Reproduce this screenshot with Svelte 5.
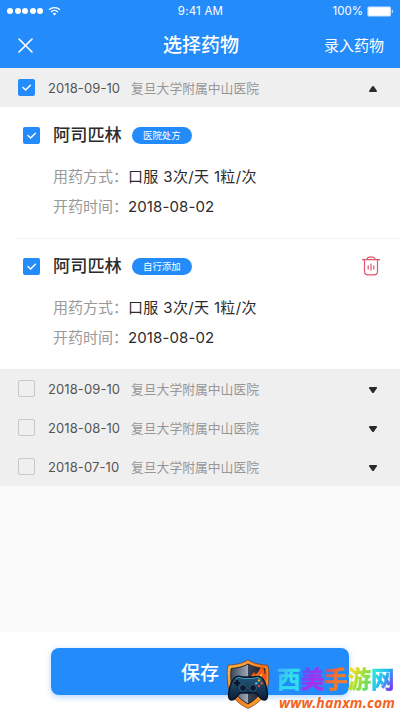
<script>
  let medicines = [
    { name: "阿司匹林", tag: "医院处方", usage: "口服 3次/天 1粒/次", date: "2018-08-02", checked: true, removable: false },
    { name: "阿司匹林", tag: "自行添加", usage: "口服 3次/天 1粒/次", date: "2018-08-02", checked: true, removable: true }
  ];

  let records = [
    { date: "2018-09-10", hospital: "复旦大学附属中山医院", checked: true, open: true, items: medicines },
    { date: "2018-09-10", hospital: "复旦大学附属中山医院", checked: false, open: false, items: [] },
    { date: "2018-08-10", hospital: "复旦大学附属中山医院", checked: false, open: false, items: [] },
    { date: "2018-07-10", hospital: "复旦大学附属中山医院", checked: false, open: false, items: [] }
  ];

  function toggleOpen(record) {
    record.open = !record.open;
    records = records;
  }

  function toggleCheck(item) {
    item.checked = !item.checked;
    records = records;
  }

  function remove(record, item) {
    record.items = record.items.filter((i) => i !== item);
    records = records;
  }
</script>

<div class="screen">
  <header>
    <div class="status">
      <div class="signal">
        {#each Array(5) as _}<i></i>{/each}
        <svg class="wifi" width="13" height="10" viewBox="0 0 14 11" fill="none" stroke="#fff" stroke-width="1.5">
          <path d="M1 4.2a8.6 8.6 0 0 1 12 0M3.2 6.5a5.5 5.5 0 0 1 7.6 0" />
          <path d="M7 10.4 5 8.3a3 3 0 0 1 4 0z" fill="#fff" stroke="none" />
        </svg>
      </div>
      <span class="time">9:41 AM</span>
      <div class="power">
        <span>100%</span>
        <svg width="27" height="11" viewBox="0 0 27 11">
          <rect x=".4" y=".4" width="23.6" height="10.2" rx="1.6" fill="#fff" fill-opacity=".75" />
          <rect x="1.6" y="1.6" width="21.2" height="7.8" rx=".6" fill="#fff" />
          <path d="M24.8 3.6c1.3.3 1.3 3.5 0 3.8z" fill="#fff" />
        </svg>
      </div>
    </div>
    <nav>
      <button class="close" aria-label="关闭">
        <svg width="15" height="15" viewBox="0 0 15 15" stroke="#fff" stroke-width="1.6" stroke-linecap="round">
          <path d="M1 1l13 13M14 1L1 14" />
        </svg>
      </button>
      <h1>选择药物</h1>
      <button class="entry">录入药物</button>
    </nav>
  </header>

  <main>
    {#each records as record}
      <section>
        <div class="record">
          <button class="check" class:on={record.checked} aria-label="选择" on:click={() => toggleCheck(record)}>
            {#if record.checked}
              <svg width="17" height="17" viewBox="0 0 17 17"><path d="M5 8.5l2.6 2.5 4.8-4.8" /></svg>
            {/if}
          </button>
          <span class="date">{record.date}</span>
          <span class="hospital">{record.hospital}</span>
          <button class="arrow" class:open={record.open} aria-label="展开" on:click={() => toggleOpen(record)}>
            <svg width="10" height="8" viewBox="0 0 10 8">
              <path d="M1.6 1h6.8q1 .2.5 1.2L6 6.4q-1 1.1-2 0L1.1 2.2Q.6 1.2 1.6 1z" fill="#2b2b2b" />
            </svg>
          </button>
        </div>

        {#if record.open}
          {#each record.items as item}
            <article>
              <div class="title">
                <button class="check" class:on={item.checked} aria-label="选择" on:click={() => toggleCheck(item)}>
                  {#if item.checked}
                    <svg width="17" height="17" viewBox="0 0 17 17"><path d="M5 8.5l2.6 2.5 4.8-4.8" /></svg>
                  {/if}
                </button>
                <h2>{item.name}</h2>
                <span class="tag">{item.tag}</span>
                {#if item.removable}
                  <button class="trash" aria-label="删除" on:click={() => remove(record, item)}>
                    <svg width="18" height="20" viewBox="0 0 18 20" fill="none" stroke="#e0566b" stroke-width="1.2">
                      <path d="M0 3.6h18M4.800 3.400c.4-1.700 1-2.300 2.300-2.300h3.800c1.300 0 1.900.6 2.300 2.300" />
                      <path d="M2.500 3.800v11.400q0 3.600 3.600 3.600h5.800q3.600 0 3.600-3.600V3.800" />
                      <path d="M6.200 9.400v4M9 7.800v7M11.800 9.400v4" />
                    </svg>
                  </button>
                {/if}
              </div>
              <dl>
                <dt>用药方式：</dt>
                <dd>{item.usage}</dd>
                <dt>开药时间：</dt>
                <dd class="num">{item.date}</dd>
              </dl>
            </article>
          {/each}
        {/if}
      </section>
    {/each}
  </main>

  <footer>
    <button class="save">保存</button>
  </footer>

  <div class="brand">
    <svg width="46" height="50" viewBox="0 0 46 50">
      <defs>
        <linearGradient id="rim" x1="0" y1="0" x2="1" y2="1">
          <stop offset="0" stop-color="#ffc252" />
          <stop offset=".5" stop-color="#f47a1c" />
          <stop offset="1" stop-color="#ffb02e" />
        </linearGradient>
        <linearGradient id="steel" x1="0" y1="0" x2="1" y2="0">
          <stop offset="0" stop-color="#3b4655" />
          <stop offset=".49" stop-color="#9aa9b8" />
          <stop offset=".5" stop-color="#3a4352" />
          <stop offset="1" stop-color="#171c28" />
        </linearGradient>
        <linearGradient id="pad" x1="0" y1="0" x2="0" y2="1">
          <stop offset="0" stop-color="#245a7b" />
          <stop offset="1" stop-color="#0b1c33" />
        </linearGradient>
      </defs>
      <path d="M23 .8C18 4.6 10 5.8 3.2 6.2 1.5 12 2.3 17 2.5 23c.5 12 9 21 20.500 26.500C35 44 43 35 43.500 23c.2-6 1-11-.7-16.800C36 5.800 28 4.600 23 .8z" fill="url(#rim)" stroke="#712e16" stroke-width=".7" />
      <path d="M23 5C18 8 12 9 6.200 9.500c-.8 5-.4 10 0 14C7.500 33 14 40 23 45c9-5 15.500-12 16.800-21.500.4-4 .8-9 0-14C34 9 28 8 23 5z" fill="url(#steel)" stroke="#262a36" />
      <path d="M22 20c5-1 4-5 8-7-1 3 1 3 3 0 2-2 1-4 5-7-1 4 3 5 1 9 3-1 3-3 3-3 1 7-1 12-5 15H25z" fill="#f05d16" />
      <path d="M26 21c4-1 4-4 7-6 0 3 2 2 4-1 0 5-1 7-4 9z" fill="#ffc83d" />
      <path d="M10 18.500c2-2 5-1.500 7.500-.5h11c3-1 6-1.500 8 .5 4 3 6 13 6 18 0 5-4 6-7 2.500L31 34H15l-4.500 5c-3 3.500-7 2.500-7-2.500 0-5 2.500-15 6.500-18z" fill="url(#pad)" stroke="#071226" stroke-width="1.300" />
      <path d="M11 19.500c3-2 6 0 7 0h10c3-1 6-1.500 8 .5" fill="none" stroke="#4ba4c6" stroke-width=".8" />
      <path d="M12 21v6M9 24h6" stroke="#081426" stroke-width="2.200" />
      <circle cx="18" cy="29" r="3.400" fill="#0c1930" stroke="#3b7894" stroke-width=".7" />
      <circle cx="28" cy="29" r="3.400" fill="#0c1930" stroke="#3b7894" stroke-width=".7" />
      <circle cx="34" cy="21.500" r="1.200" fill="#f3b02d" />
      <circle cx="31.300" cy="24.200" r="1.200" fill="#45bce8" />
      <circle cx="36.700" cy="24.200" r="1.200" fill="#ef5230" />
      <circle cx="34" cy="27" r="1.200" fill="#e94a3e" />
    </svg>
    <div class="words">
      <div class="cn"><b class="c1">西</b><b class="c2">美</b><b class="c3">手</b><b class="c4">游</b><b class="c5">网</b></div>
      <div class="url">www.hanxm.com</div>
    </div>
  </div>
</div>

<style>
  :global(body) { background: #fafafa; }

  .screen {
    --blue: #248bfb;
    position: relative;
    display: flex; flex-direction: column;
    width: 400px; height: 710px;
    overflow: hidden;
    background: #fafafa;
    font-family: Inter, "Noto Sans CJK SC", sans-serif;
    color: #2b2b2b;
  }

  button {
    margin: 0; padding: 0; border: 0;
    background: none; color: inherit;
    font: inherit; cursor: pointer;
  }
  svg { display: block; }

  header { height: 68px; background: var(--blue); color: #fff; }

  .status {
    display: grid; grid-template-columns: 1fr auto 1fr; align-items: center;
    height: 22px; padding: 0 6px 0 7px;
    font-size: 11.5px; line-height: 22px;
  }
  .signal { display: flex; align-items: center; gap: 1.5px; }
  .signal i { width: 6px; height: 6px; border-radius: 50%; background: #fff; }
  .wifi { margin-left: 3px; }
  .time { letter-spacing: .2px; }
  .power { display: flex; justify-content: flex-end; align-items: center; gap: 4px; }

  nav {
    display: grid; grid-template-columns: 1fr auto 1fr; align-items: center;
    height: 46px; padding: 0 16px 0 18px;
  }
  .close { justify-self: start; }
  h1 { margin: 0; padding-top: 2px; font-size: 19px; font-weight: 500; line-height: 44px; }
  .entry { justify-self: end; margin-top: -2px; font-size: 15px; }

  .record {
    display: flex; align-items: center;
    height: 39px; padding: 0 22px 0 18px;
    background: #efefef;
  }

  .check {
    flex: none;
    box-sizing: border-box;
    width: 17px; height: 17px;
    border: 1px solid #c8c8c8; border-radius: 2px;
  }
  .check.on { border: 0; background: var(--blue); }
  .check path { fill: none; stroke: #fff; stroke-width: 1.5; stroke-linecap: round; stroke-linejoin: round; }

  .date { width: 83px; margin-left: 13px; font-size: 13px; letter-spacing: .1px; color: #555; white-space: nowrap; }
  .hospital { font-size: 12.8px; color: #969696; }
  .arrow { margin-left: auto; padding-top: 3px; }
  .arrow.open svg { transform: rotate(180deg); }

  article {
    box-sizing: border-box;
    height: 131px; padding: 17px 20px 0 23px;
    background: #fff;
  }
  article + article { box-shadow: inset 16px 0 #fff, inset 0 1px #f2f2f2; }

  .title { display: flex; align-items: center; height: 22px; }
  h2 { margin: 0 0 0 13px; font-size: 17.2px; font-weight: 500; line-height: 22px; }
  .tag {
    width: 60px; height: 17px; margin-left: 10px;
    border-radius: 9px;
    background: var(--blue); color: #fff;
    font-size: 9.4px; line-height: 18px; text-align: center;
  }
  .trash { margin-left: auto; }

  dl {
    display: grid; grid-template-columns: 75px 1fr; grid-auto-rows: 30px;
    margin: 16px 0 0 30px;
    font-size: 15px; line-height: 30px;
  }
  dt { color: #999; white-space: nowrap; }
  dd { margin: 0; letter-spacing: .35px; white-space: nowrap; }
  .num { letter-spacing: .12px; }

  footer {
    box-sizing: border-box;
    height: 78px; margin-top: auto; padding: 16px 51px 0;
    background: #fff;
  }
  .save {
    width: 100%; height: 47px;
    border-radius: 8px;
    background: var(--blue); color: #fff;
    box-shadow: 0 2px 6px rgba(36, 139, 251, .35);
    font-size: 19px; font-weight: 500;
  }

  /* site mark floats over the bottom bar */
  .brand {
    position: absolute; left: 225px; top: 659px;
    display: flex;
  }
  .words { padding: 7px 0 0 6px; }
  .cn { display: flex; height: 27px; font-size: 23.500px; line-height: 27px; }
  .cn b { font-weight: 700; color: transparent; background-clip: text; -webkit-background-clip: text; -webkit-text-stroke: .6px transparent; }
  .c1 { background-image: linear-gradient(120deg, #3fb4f7 15%, #2fe0ea 50%, #35d8f2); }
  .c2 { background-image: linear-gradient(120deg, #5a55f8 15%, #a331f2 50%, #b12fe0); }
  .c3 { background-image: linear-gradient(120deg, #e0466e 10%, #f2742c 45%, #f58a24); }
  .c4 { background-image: linear-gradient(120deg, #f8d823 15%, #a1df35 50%, #3fdd80); }
  .c5 { background-image: linear-gradient(120deg, #2ce8d8 15%, #22b8f5 50%, #7a35f1 85%); }
  .url {
    margin-left: 2px;
    font: italic 700 14px/19px "Noto Sans", "Open Sans", sans-serif;
    letter-spacing: .2px;
    color: #f26422;
  }
</style>
